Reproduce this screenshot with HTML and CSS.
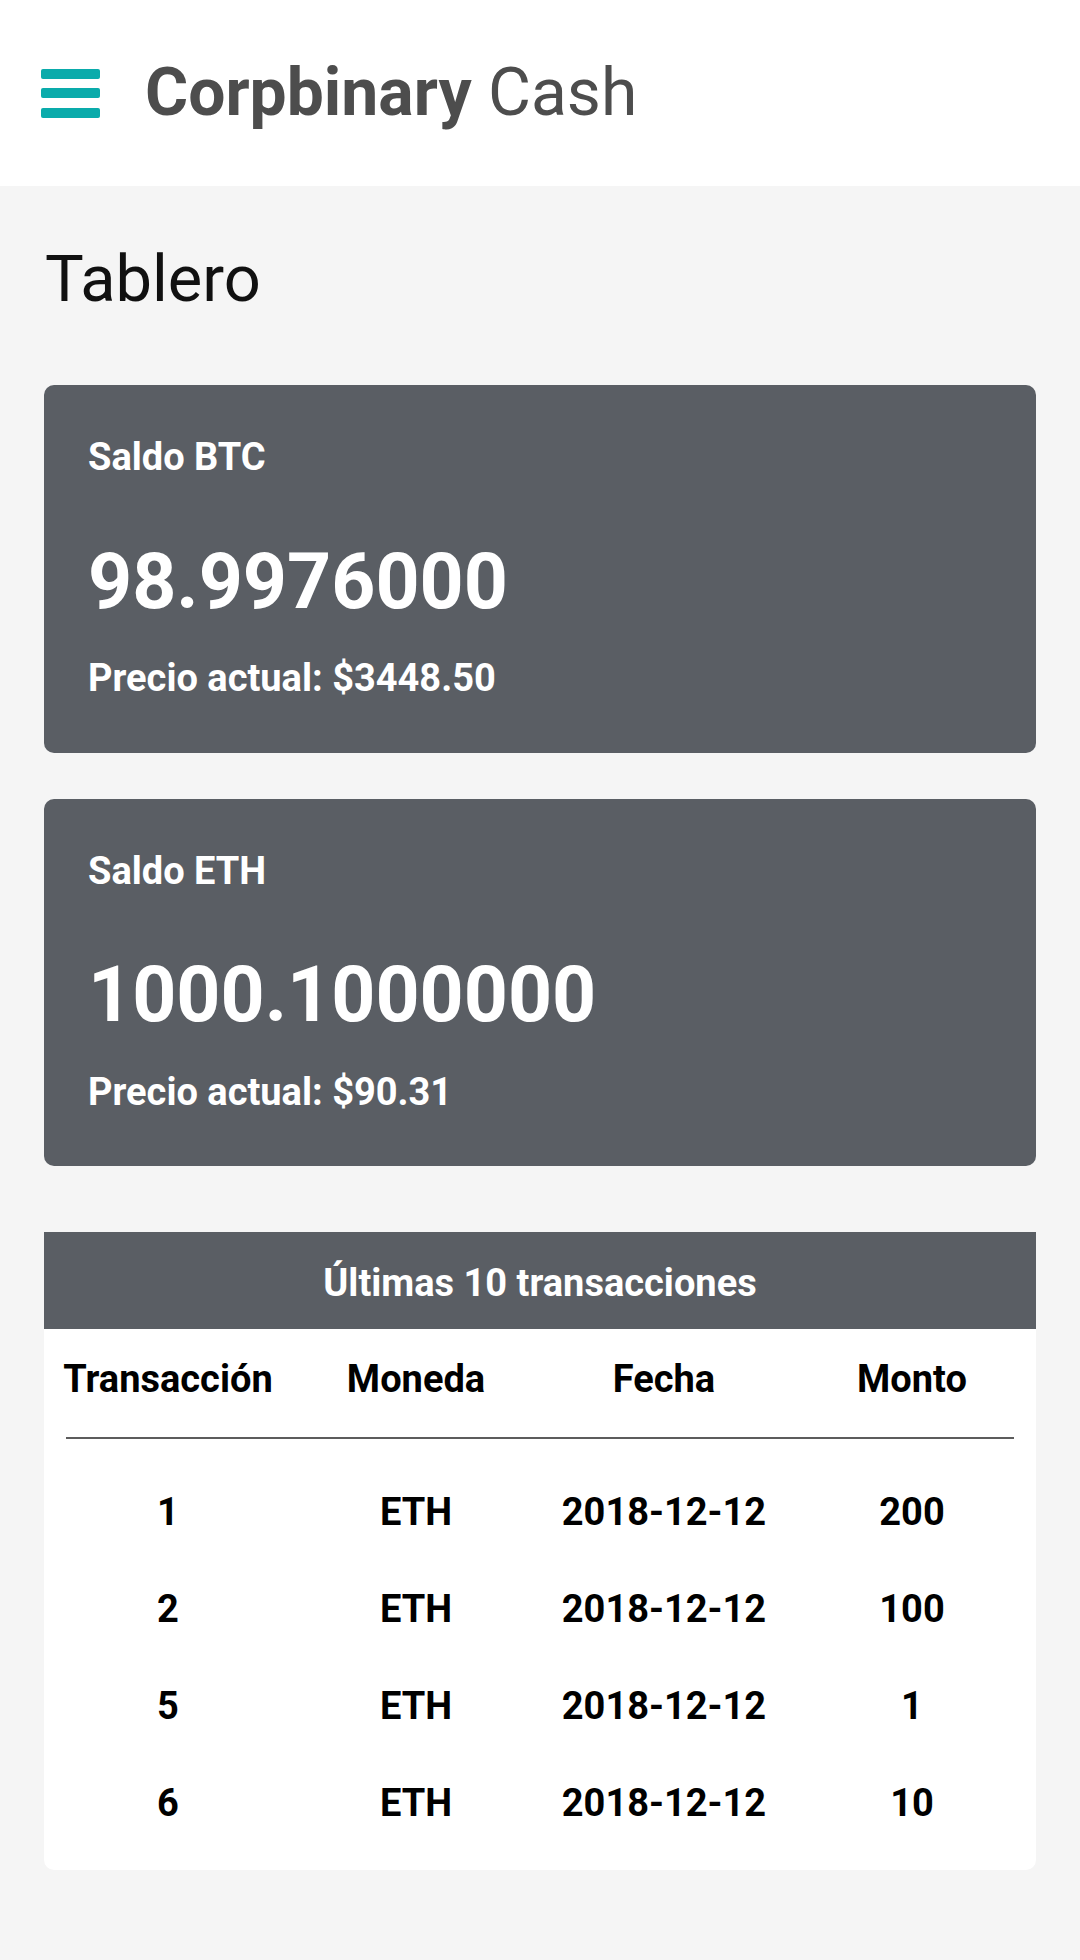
FILE: index.html
```html
<!DOCTYPE html>
<html lang="es">
<head>
<meta charset="utf-8">
<title>Corpbinary Cash</title>
<link rel="stylesheet" href="styles.css">
</head>
<body>
<header class="topbar">
  <button class="menu" aria-label="Menú">
    <span></span><span></span><span></span>
  </button>
  <div class="brand"><strong>Corpbinary</strong> Cash</div>
</header>
<main class="content">
  <h1 class="page-title">Tablero</h1>

  <section class="balance">
    <div class="balance-label">Saldo BTC</div>
    <div class="balance-value">98.9976000</div>
    <div class="balance-price">Precio actual: $3448.50</div>
  </section>

  <section class="balance">
    <div class="balance-label">Saldo ETH</div>
    <div class="balance-value">1000.1000000</div>
    <div class="balance-price">Precio actual: $90.31</div>
  </section>

  <section class="tx">
    <div class="tx-title">Últimas 10 transacciones</div>
    <div class="tx-row tx-head">
      <div>Transacción</div><div>Moneda</div><div>Fecha</div><div>Monto</div>
    </div>
    <div class="tx-divider"></div>
    <div class="tx-body">
      <div class="tx-row"><div>1</div><div>ETH</div><div>2018-12-12</div><div>200</div></div>
      <div class="tx-row"><div>2</div><div>ETH</div><div>2018-12-12</div><div>100</div></div>
      <div class="tx-row"><div>5</div><div>ETH</div><div>2018-12-12</div><div>1</div></div>
      <div class="tx-row"><div>6</div><div>ETH</div><div>2018-12-12</div><div>10</div></div>
    </div>
  </section>
</main>
</body>
</html>
```

FILE: styles.css
```css
* { box-sizing: border-box; }

html, body {
  margin: 0;
  padding: 0;
}

body {
  background: #f5f5f5;
  font-family: Roboto, "Liberation Sans", Arial, sans-serif;
  color: #000;
  min-height: 1960px;
}

.topbar {
  height: 186px;
  background: #ffffff;
  display: flex;
  align-items: center;
  padding-left: 41px;
  gap: 45px;
}

.menu {
  width: 59px;
  height: 49px;
  padding: 0;
  margin: 0;
  border: 0;
  background: transparent;
  display: flex;
  flex-direction: column;
  justify-content: space-between;
}

.menu span {
  display: block;
  width: 59px;
  height: 10px;
  border-radius: 2px;
  background: #0aabab;
}

.brand {
  font-size: 66px;
  line-height: 1.2;
  color: #4d4d4d;
  font-weight: 400;
}

.brand strong {
  font-weight: 700;
}

.content {
  padding: 54px 44px 0;
}

.page-title {
  margin: 0 0 67px 1px;
  font-size: 65px;
  line-height: 1.2;
  font-weight: 400;
  color: #111;
}

.balance {
  background: #5a5e64;
  color: #ffffff;
  border-radius: 10px;
  padding: 50px 44px 51px;
  margin-bottom: 46px;
}

.balance-label,
.balance-price {
  font-size: 38px;
  line-height: 1.2;
  font-weight: 700;
}

.balance-value {
  font-size: 77px;
  line-height: 1.2;
  font-weight: 700;
  margin: 55px 0 28px;
}

.tx {
  margin-top: 66px;
  background: #ffffff;
  border-radius: 0 0 10px 10px;
  padding-bottom: 18px;
}

.tx-title {
  background: #5a5e64;
  color: #ffffff;
  text-align: center;
  font-size: 38px;
  font-weight: 700;
  line-height: 41px;
  padding: 31px 0 25px;
}

.tx-row {
  display: grid;
  grid-template-columns: repeat(4, 1fr);
  text-align: center;
  font-size: 38px;
  font-weight: 700;
  line-height: 97px;
}

.tx-head {
  line-height: 1.2;
  padding-top: 28px;
}

.tx-divider {
  height: 2px;
  background: #5c5c5c;
  margin: 34px 22px 25px;
}
```
